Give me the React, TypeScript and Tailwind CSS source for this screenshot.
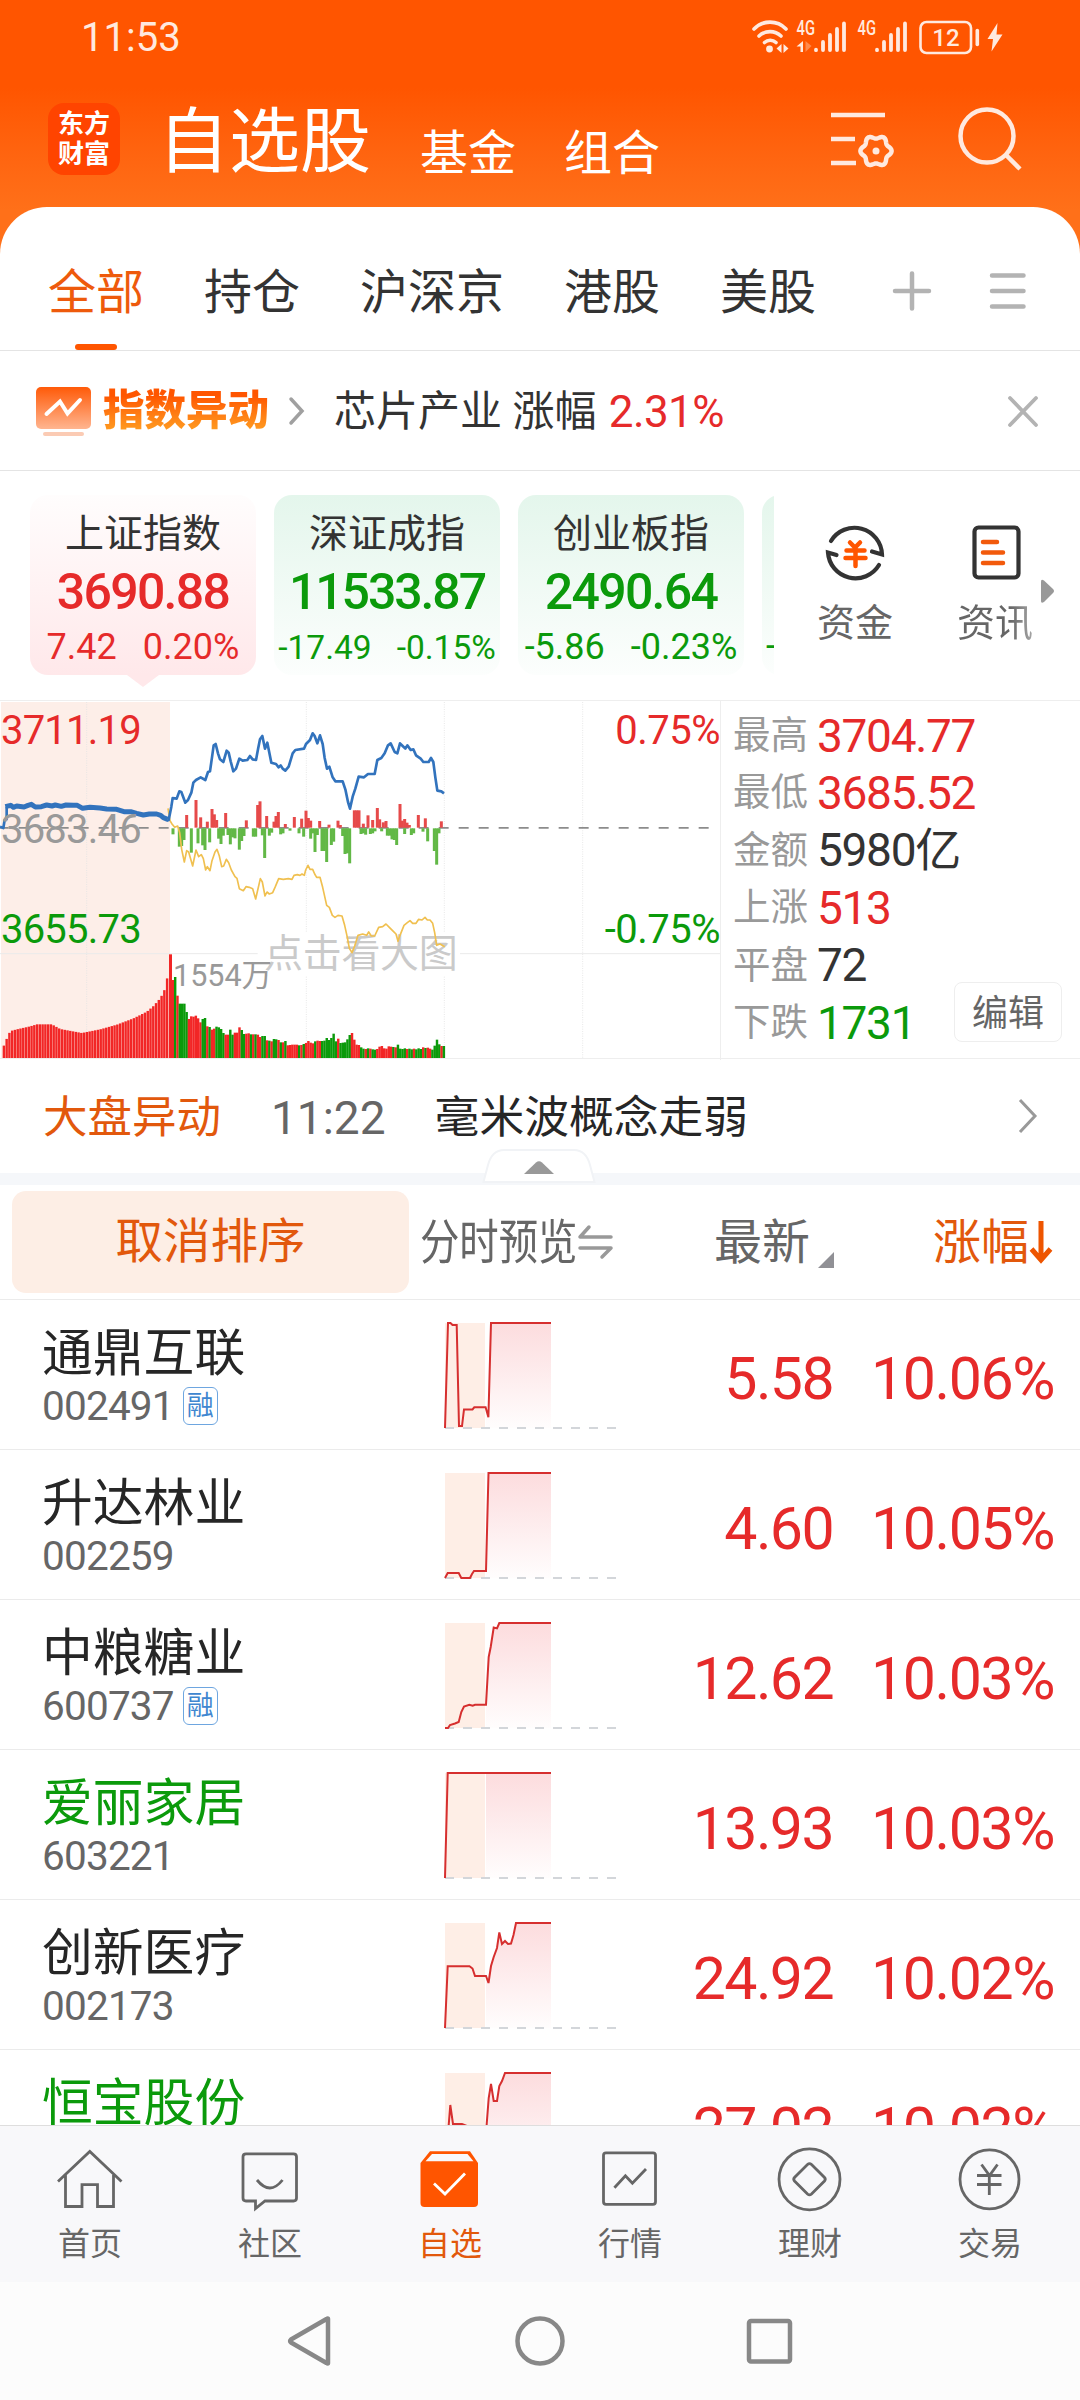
import type { ReactNode } from "react"

const tabs = ["全部", "持仓", "沪深京", "港股", "美股"]

const indexes = [
  { name: "上证指数", value: "3690.88", diff: "7.42", rate: "0.20%", up: true, small: false },
  { name: "深证成指", value: "11533.87", diff: "-17.49", rate: "-0.15%", up: false, small: true },
  { name: "创业板指", value: "2490.64", diff: "-5.86", rate: "-0.23%", up: false, small: false },
]

const stats = [
  { label: "最高", value: "3704.77", color: "text-[#e62a2a]" },
  { label: "最低", value: "3685.52", color: "text-[#e62a2a]" },
  { label: "金额", value: "5980亿", color: "text-[#333333]" },
  { label: "上涨", value: "513", color: "text-[#e62a2a]" },
  { label: "平盘", value: "72", color: "text-[#333333]" },
  { label: "下跌", value: "1731", color: "text-[#0b9a0b]" },
]

const stocks = [
  {
    name: "通鼎互联",
    code: "002491",
    margin: true,
    price: "5.58",
    rate: "10.06%",
    line: "0,105 3,0 5.5,0 7.5,2 11.7,2 14,103 17,103 19,86.5 27.5,86.5 29.3,84.3 40.6,84.3 43.4,94.3 46,0 106,0",
    area: "41,85 43.4,94.3 46,0 106,0 106,105 41,105",
  },
  {
    name: "升达林业",
    code: "002259",
    price: "4.60",
    rate: "10.05%",
    line: "0,105 2.7,100 13.7,100 16.3,105 25,105 27,101 29,98 41,98 43.5,0 106,0",
    area: "41,98 43.5,0 106,0 106,105 41,105",
  },
  {
    name: "中粮糖业",
    code: "600737",
    margin: true,
    price: "12.62",
    rate: "10.03%",
    line: "0,105 3,105 5,102 10,100.5 13.7,99 16.3,89 19,83.5 24.3,81.7 27.7,82.6 30,81.7 41,81.7 43.7,34 45.7,24 48.7,4.5 52,5.4 54.3,0 106,0",
    area: "41,81.7 43.7,34 45.7,24 48.7,4.5 52,5.4 54.3,0 106,0 106,105 41,105",
  },
  {
    name: "爱丽家居",
    code: "603221",
    green: true,
    price: "13.93",
    rate: "10.03%",
    line: "0,105 2.7,0 106,0",
    area: "41,0 106,0 106,105 41,105",
  },
  {
    name: "创新医疗",
    code: "002173",
    price: "24.92",
    rate: "10.02%",
    line: "0,105 2.7,43.3 24.5,43.3 27.5,45.5 30,53 41,53 43.5,60 46,43 48.7,34 52,25 54.3,9.4 57,21 60,18 63,21 66,20.5 68.5,12 71,0 106,0",
    area: "41,53 43.5,60 46,43 48.7,34 52,25 54.3,9.4 57,21 60,18 63,21 66,20.5 68.5,12 71,0 106,0 106,105 41,105",
  },
  {
    name: "恒宝股份",
    green: true,
    price: "27.02",
    rate: "10.02%",
    line: "0,105 3.7,52 5.3,32 8,51 17,51 22,53 41,60 43.7,25 46,11 48.7,28 52,28 54.3,13 57,8 60,0 106,0",
    area: "41,60 43.7,25 46,11 48.7,28 52,28 54.3,13 57,8 60,0 106,0 106,105 41,105",
  },
]

// chart data, in thirds of a pixel
const morningTops = [
  [8, 1074], [18, 1050], [26, 1030], [35, 1022], [50, 1018], [90, 1009], [110, 1003], [155, 1003],
  [180, 1017], [245, 1029], [300, 1018], [350, 1004], [400, 985], [440, 965], [460, 948], [480, 925],
  [492, 903], [498, 865], [510, 866],
]

const afternoonVolume =
  "234r 243g 187r 163g 163g 163g 138g 117r 125r 124r 127r 119r 107r 117g 120g 95r 93g 85r 88r 94g 92g 87g 75g 70r 70r 85g 70g 76r 76r 92r 84g 72g 73r 74r 71g 71r 71g 70r 63r 66g 66g 53r 52g 50r 57g 56g 54r 47g 47r 51g 38r 39r 40r 40r 40r 38g 39r 42g 45r 51r 46r 44r 50g 52r 51r 51g 52g 60g 54g 60g 73g 50g 58r 45g 46g 47g 56g 69g 75r 55r 40r 39r 32g 28g 27r 29g 28r 26g 25g 27r 34r 36r 29r 28r 35r 34r 33g 32r 40g 28g 27g 29g 27r 28g 26g 28r 26g 29g 27g 32r 30g 31r 28r 25g 37g 55g 41g 36r 36g".split(
    " ",
  )

const ups = [
  [560, 375], [588, 330], [602, 382], [622, 395], [636, 357], [643, 373], [650, 390], [677, 369],
  [739, 391], [773, 345], [780, 334], [800, 378], [822, 395], [828, 378], [835, 366], [856, 402],
  [883, 381], [905, 386], [918, 362], [925, 384], [932, 392], [959, 393], [987, 404], [1014, 392],
  [1021, 405], [1063, 361], [1070, 361], [1077, 361], [1090, 401], [1104, 376], [1118, 390],
  [1132, 354], [1139, 388], [1150, 397], [1158, 393], [1200, 342], [1207, 392], [1214, 387],
  [1221, 398], [1228, 405], [1255, 375], [1276, 385], [1324, 394],
]

const downs = [
  [519, 433], [538, 470], [545, 468], [552, 450], [574, 488], [594, 460], [608, 466], [615, 480],
  [629, 457], [656, 446], [663, 462], [670, 437], [684, 435], [691, 463], [698, 442], [705, 445],
  [718, 479], [725, 453], [732, 438], [760, 440], [767, 440], [787, 436], [794, 504], [808, 437],
  [815, 428], [842, 433], [849, 430], [870, 422], [897, 430], [911, 440], [932, 446], [938, 430],
  [945, 486], [952, 435], [966, 483], [973, 483], [980, 516], [994, 465], [1001, 455], [1028, 438],
  [1035, 492], [1042, 490], [1049, 520], [1083, 432], [1090, 430], [1097, 434], [1111, 432],
  [1118, 430], [1125, 424], [1145, 424], [1162, 437], [1169, 437], [1176, 448], [1183, 450],
  [1190, 465], [1214, 432], [1234, 435], [1241, 430], [1269, 425], [1283, 454], [1303, 483],
  [1310, 524], [1317, 430],
]

function topAt(x: number) {
  for (let i = 1; i < morningTops.length; i++) {
    const [x0, y0] = morningTops[i - 1]
    const [x1, y1] = morningTops[i]
    if (x <= x1) return y0 + ((y1 - y0) * (x - x0)) / (x1 - x0)
  }
  return 866
}

// six-lobed outline of the settings gear
const gear = Array.from({ length: 72 }, (_, i) => {
  const a = (i * Math.PI) / 36
  const r = 14 + 1.6 * Math.cos(6 * a)
  return `${(49 + r * Math.cos(a)).toFixed(2)},${(45 + r * Math.sin(a)).toFixed(2)}`
}).join(" ")

function StatusIcons() {
  return (
    <svg width="260" height="44" viewBox="0 0 260 44" fill="none" stroke="#ffe9df" strokeLinecap="round">
      <path d="M4 13a22 22 0 0 1 32 0" strokeWidth="3.6" />
      <path d="M9 20a16 16 0 0 1 22 0" strokeWidth="3.6" />
      <path d="M14.500 26.500a8.500 8.500 0 0 1 11.500 0" strokeWidth="3.6" />
      <circle cx="19.500" cy="33" r="3.400" fill="#ffe9df" stroke="none" />
      <path d="M31.500 28v9l-5-4.500zM33.500 28v9l5-4.500z" fill="#ffe9df" stroke="none" />
      <path d="M53 25v11h-2.500v-5.500h-4z" fill="#ffe9df" stroke="none" />
      <path d="M55.500 25v11l6-6z" fill="#ff8a4d" stroke="none" />
      <path d="M66 34.200v-.5M73 34v-8M80 34v-15M87 34V13M94 34V7.500" strokeWidth="3.800" />
      <path d="M127 34.200v-.5M134 34v-8M141 34v-15M148 34V13M155 34V7.500" strokeWidth="3.800" />
      <rect x="170.500" y="6" width="50.500" height="31" rx="6" strokeWidth="2.600" />
      <path d="M227.300 14.500v14" strokeWidth="3.600" />
      <path d="M247.500 7l-10 16h5.500l-1.500 12.500 11-17h-6z" fill="#ffe9df" stroke="none" />
      <g fill="#ffe9df" stroke="none" className="font-medium">
        <text x="46.500" y="18.500" fontSize="19.500" textLength="18.500" lengthAdjust="spacingAndGlyphs">4G</text>
        <text x="107.500" y="18.500" fontSize="19.500" textLength="18.500" lengthAdjust="spacingAndGlyphs">4G</text>
        <text x="196" y="30" fontSize="24" textAnchor="middle">12</text>
      </g>
    </svg>
  )
}

function Header() {
  return (
    <header className="h-[207px] text-white">
      <div className="flex h-[76px] items-center justify-between pl-[81px] pr-[70px]">
        <span className="text-[40px] leading-none text-[#ffe9df]">11:53</span>
        <StatusIcons />
      </div>
      <div className="flex h-[131px] items-start pl-12">
        <div className="mt-[27px] flex h-[72px] w-[72px] flex-col items-center justify-center rounded-2xl bg-[#ff4400] text-[26px] font-bold leading-[30px]">
          <span>东方</span>
          <span>财富</span>
        </div>
        <h1 className="ml-[38px] mt-[30px] text-[71px] leading-none">自选股</h1>
        <span className="ml-[49px] mt-[54px] text-[48px] leading-none">基金</span>
        <span className="ml-[48px] mt-[54px] text-[48px] leading-none">组合</span>
        <svg className="ml-[167px] mt-[30px]" width="68" height="68" viewBox="0 0 68 68" fill="none" stroke="#ffe9df" strokeWidth="4.500">
          <path d="M4 9h54M4 33h24M4 57h25" />
          <polygon points={gear} strokeLinejoin="round" />
          <circle cx="49" cy="45" r="3.500" fill="#ffe9df" stroke="none" />
        </svg>
        <svg className="ml-[60px] mt-[30px]" width="70" height="70" viewBox="0 0 70 70" fill="none" stroke="#ffe9df" strokeWidth="4.500">
          <circle cx="32" cy="30" r="26.500" />
          <path d="M51 49l14 14" />
        </svg>
      </div>
    </header>
  )
}

function Tabs() {
  return (
    <div className="flex h-[144px] items-center rounded-t-[47px] border-b border-[#e4e4e4] bg-white pl-12 pt-6 text-[48px] leading-none text-[#333333]">
      {tabs.map((tab, i) => (
        <div key={tab} className={i === 0 ? "relative mr-[60px] pt-[5px] text-[#ee5a0c]" : i === 4 ? "pt-[5px]" : "mr-[60px] pt-[5px]"}>
          {tab}
          {i === 0 && <span className="absolute -bottom-[33px] left-[27px] h-1.5 w-[42px] rounded-full bg-[#ff5500]" />}
        </div>
      ))}
      <svg className="ml-[76px]" width="40" height="40" viewBox="0 0 40 40" stroke="#b3b3b3" strokeWidth="4.500" strokeLinecap="round">
        <path d="M20 2.500v35M3 20h34" />
      </svg>
      <svg className="ml-[56px]" width="40" height="40" viewBox="0 0 40 40" stroke="#b3b3b3" strokeWidth="4.500" strokeLinecap="round">
        <path d="M4 4.500h31.500M4 20h31.500M4 35.500h31.500" />
      </svg>
    </div>
  )
}

function Notice() {
  return (
    <div className="flex h-[120px] items-center border-b border-[#e4e4e4] pl-9">
      <svg width="56" height="50" viewBox="0 0 56 50" fill="none">
        <defs>
          <linearGradient id="notice" x1="0" y1="0" x2="0" y2="1">
            <stop offset="0" stopColor="#ff5a08" />
            <stop offset="1" stopColor="#ffb590" />
          </linearGradient>
        </defs>
        <rect y="1" width="55" height="42" rx="5" fill="url(#notice)" />
        <rect x="7" y="46" width="41" height="4" rx="2" fill="#fbcbb4" />
        <path d="M10.500 28L24 15.500l7.500 12L44 14" stroke="#fff" strokeWidth="4" strokeLinecap="round" />
      </svg>
      <span className="ml-[11px] bg-gradient-to-b from-[#ff5500] from-20% to-[#ff9a20] to-90% bg-clip-text text-[41.500px] font-black leading-[1.2] text-transparent">
        指数异动
      </span>
      <svg className="ml-[18px]" width="20" height="30" viewBox="0 0 20 30" fill="none" stroke="#a0a0a0" strokeWidth="3.500" strokeLinecap="round">
        <path d="M4 3l11 12L4 27" />
      </svg>
      <span className="ml-[27px] mt-0.5 whitespace-pre text-[42px] leading-none text-[#333333]">芯片产业 涨幅 </span>
      <span className="ml-[2px] mt-0.5 text-[44px] leading-none tracking-[-0.600px] text-[#e62a2a]">2.31%</span>
      <svg className="ml-auto mr-[41px]" width="32" height="32" viewBox="0 0 32 32" stroke="#b3b3b3" strokeWidth="3.800" strokeLinecap="round">
        <path d="M3 3l26 27M29 3L3 30" />
      </svg>
    </div>
  )
}

function Indexes() {
  return (
    <div className="flex h-[229px] pt-6">
      <div className="flex w-[774px] gap-[18px] overflow-hidden pl-[30px]">
        {indexes.map((item) => (
          <div key={item.name} className="w-[226px] shrink-0">
            <div
              className={
                item.up
                  ? "flex h-[180px] flex-col items-center rounded-[18px] bg-gradient-to-b from-[#fffdfd] to-[#ffe8ea] pt-[19px] text-[#e62a2a]"
                  : "flex h-[180px] flex-col items-center rounded-[18px] bg-gradient-to-b from-[#e4f6ec] to-[#fcfefd] pt-[19px] text-[#0b9a0b]"
              }
            >
              <span className="text-[39px] leading-[40px] text-[#333333]">{item.name}</span>
              <span
                className={
                  item.small
                    ? "mt-[13px] text-[50px] font-medium leading-[50px] tracking-[-2.100px]"
                    : "mt-[13px] text-[50px] font-medium leading-[50px] tracking-[-1.700px]"
                }
              >
                {item.value}
              </span>
              <div
                className={
                  item.small
                    ? "mt-[13px] flex gap-[25px] whitespace-nowrap text-[33.500px] leading-[36px]"
                    : "mt-[12px] flex gap-[26px] whitespace-nowrap text-[36px] leading-[36px]"
                }
              >
                <span>{item.diff}</span>
                <span>{item.rate}</span>
              </div>
            </div>
            {item.up && (
              <svg className="mx-auto" width="32" height="12" viewBox="0 0 32 12">
                <path d="M0 0h32L16 12z" fill="#ffe8ea" />
              </svg>
            )}
          </div>
        ))}
        <div className="h-[180px] w-[226px] shrink-0 rounded-[18px] bg-gradient-to-b from-[#e4f6ec] to-[#fcfefd] pl-1 pt-[133px] text-[36px] leading-[36px] text-[#0b9a0b]">
          -
        </div>
      </div>
      <div className="flex flex-1 text-[38px] leading-none text-[#666666]">
        <div className="ml-[43px] flex w-[76px] flex-col items-center pt-6">
          <svg width="66" height="66" viewBox="0 0 66 66" fill="none" stroke="#333" strokeWidth="4.200" strokeLinecap="round">
            <path d="M9 22A27.500 27.500 0 0 1 60 35.500L50 32.500" />
            <path d="M57 46A27.500 27.500 0 0 1 6 33.500L14.500 36" />
            <g stroke="#ff5500" strokeWidth="4.500">
              <path d="M28 23.500l5 5 5-5M24.500 31.500h18M23.500 39h20M33.500 29v18" />
            </g>
          </svg>
          <span className="mt-[19px]">资金</span>
        </div>
        <div className="ml-[64px] flex w-[76px] flex-col items-center pt-6">
          <svg width="66" height="66" viewBox="0 0 66 66" fill="none" stroke="#333" strokeWidth="4.200" strokeLinecap="round">
            <rect x="12.500" y="8.500" width="44" height="50" rx="4" />
            <path d="M21 23h14M21 33.500h20M21 44h20" stroke="#f25a0c" strokeWidth="4.500" />
          </svg>
          <span className="mt-[19px] bg-gradient-to-r from-[#666666] from-70% to-[#a8a8a8] bg-clip-text text-transparent">
            资讯
          </span>
        </div>
        <svg className="ml-[6px] mt-[83px]" width="18" height="26" viewBox="0 0 18 26">
          <path d="M2 3.500q0-3 3-1L14 11q2 2 0 4l-9 9q-3 2-3-1z" fill="#999" />
        </svg>
      </div>
    </div>
  )
}

function TrendChart() {
  const bars: ReactNode[] = []
  for (let x = 8; x < 506; x += 8.3) {
    const y = topAt(x + 3)
    bars.push(<rect key={x} x={x} y={y} width={7.300} height={1104 - y} fill="#f22626" />)
  }
  return (
    <div className="relative h-[359px] w-[721px] border-r border-[#eeeeee]">
      <span className="absolute left-[264px] top-[234px] text-[39px] leading-none tracking-[-0.300px] text-[#cacaca]">点击看大图</span>
      <svg className="absolute left-0 top-0" width="720" height="359" viewBox="0 33 2160 1077" fill="none">
        <rect x="3" y="36" width="507" height="1068" fill="#fdeee8" />
        <path d="M0 791h773M1380 791h780" stroke="#eaeaea" strokeWidth="3" />
        <path d="M260 36v1068M919 36v690M919 860v244M1333 36v690M1333 860v244M1748 36v1068" stroke="#e3e3e3" strokeWidth="2.500" strokeDasharray="3 4" />
        <path d="M0 413.500h2136" stroke="#8c8c8c" strokeWidth="5" strokeDasharray="30 30" strokeDashoffset="4" />
        {bars}
        <rect x="507" y="793" width="9" height="311" fill="#f22626" />
        {afternoonVolume.map((v, i) => {
          const h = parseInt(v)
          return (
            <rect key={i} x={515 + i * 6.890} y={1104 - h} width="7.300" height={h} fill={v.endsWith("g") ? "#0b9a0b" : "#f22626"} />
          )
        })}
        {ups.map(([x, y]) => (
          <rect key={x} x={x - 4.500} y={y} width="9" height={413 - y} fill="#e64a4a" />
        ))}
        {downs.map(([x, y]) => (
          <rect key={x} x={x - 4.500} y="415" width="9" height={y - 415} fill="#62b846" />
        ))}
        <polyline
          stroke="#f0c050"
          strokeWidth="5"
          strokeLinejoin="round"
          points="504,355 510,392 516,402 524,412 533,408 539,428 545,478 553,516 560,482 566,486 578,528 588,480 596,500 604,494 610,506 617,540 622,530 630,542 636,512 645,486 651,478 658,498 665,530 671,528 679,508 686,518 694,540 705,560 711,565 718,596 730,602 738,590 748,592 758,596 767,627 781,566 787,576 795,618 801,606 808,612 818,608 826,590 836,566 850,568 865,566 876,568 882,556 892,554 900,556 906,552 913,556 917,540 924,526 930,538 938,538 944,552 950,562 960,562 968,592 980,646 988,652 997,676 1005,682 1014,676 1026,678 1034,706 1042,742 1048,775 1056,788 1064,768 1074,736 1088,732 1100,736 1106,726 1114,738 1124,738 1136,712 1148,710 1158,702 1168,712 1180,724 1188,732 1194,754 1200,736 1212,706 1222,698 1230,692 1238,700 1248,700 1256,688 1266,690 1275,682 1282,690 1290,690 1298,700 1304,728 1310,766 1320,762 1334,770"
        />
        <polyline
          stroke="#3273bd"
          strokeWidth="15"
          strokeLinejoin="round"
          points="16,350 32,346 40,352 50,348 72,351 84,346 94,343 106,351 124,350 140,345 156,348 166,345 184,349 198,345 220,346 232,346 248,355 270,352 300,354 320,357 350,358 372,365 392,365 410,370 430,375 448,372 470,372 482,376 490,383 503,388"
        />
        <polyline stroke="#3273bd" strokeWidth="8" strokeLinejoin="round" points="0,410 10,414 14,390 20,388 20,350" />
        <polyline
          stroke="#3273bd"
          strokeWidth="8"
          strokeLinejoin="round"
          points="500,392 506,390 514,350 518,324 530,326 538,304 544,306 556,338 564,330 574,308 580,278 588,270 602,262 616,270 624,246 630,244 636,202 641,166 647,162 654,190 660,208 670,216 680,182 686,188 692,214 700,244 708,236 718,206 728,212 742,210 750,198 758,208 768,210 774,178 780,148 787,138 795,176 802,158 814,218 828,222 836,232 842,226 848,236 856,242 866,230 878,190 886,180 912,176 918,162 930,150 938,130 944,138 952,160 960,136 968,162 974,204 981,236 988,230 998,262 1006,274 1028,274 1036,298 1044,336 1050,356 1058,320 1066,296 1076,260 1092,262 1104,252 1124,252 1132,210 1144,204 1154,190 1164,166 1172,160 1184,186 1192,190 1200,160 1208,168 1216,176 1222,166 1232,180 1240,178 1248,196 1262,206 1270,216 1286,216 1293,204 1300,216 1306,262 1312,302 1324,304 1332,310"
        />
      </svg>
      <div className="absolute left-[1px] top-[10px] text-[40px] leading-none tracking-[-0.800px] text-[#e62a2a]">3711.19</div>
      <div className="absolute left-[1px] top-[109px] text-[40px] leading-none tracking-[-0.800px] text-[#999999]">3683.46</div>
      <div className="absolute left-[1px] top-[209px] text-[40px] leading-none tracking-[-0.800px] text-[#0b9a0b]">3655.73</div>
      <div className="absolute right-0 top-[10px] text-[40px] leading-none tracking-[-0.500px] text-[#e62a2a]">0.75%</div>
      <div className="absolute right-0 top-[209px] text-[40px] leading-none tracking-[-0.500px] text-[#0b9a0b]">-0.75%</div>
      <div className="absolute left-[173px] top-[260px] text-[30.500px] leading-none text-[#999999]">1554万</div>
    </div>
  )
}

function Market() {
  return (
    <div className="flex h-[359px] border-y border-[#eeeeee]">
      <TrendChart />
      <div className="relative flex-1 pl-[12px] pt-[6px]">
        {stats.map((item) => (
          <div key={item.label} className="flex h-[57.400px] items-center">
            <span className="w-[84px] text-[37.500px] leading-none text-[#999999]">{item.label}</span>
            <span className={`text-[46px] leading-none tracking-[-1.300px] ${item.color}`}>{item.value}</span>
          </div>
        ))}
        <div className="absolute bottom-[16px] right-[18px] flex h-[60px] w-[108px] items-center justify-center rounded-lg border border-[#eeeeee] bg-white pt-[3px] text-[36px] leading-none text-[#666666]">
          编辑
        </div>
      </div>
    </div>
  )
}

function MarketNews() {
  return (
    <div className="relative flex h-[126px] items-center border-b-[12px] border-[#f5f7fa] pl-[43px] leading-none">
      <span className="mt-1 text-[44.500px] text-[#e2580c]">大盘异动</span>
      <span className="ml-[50px] mt-1 text-[46px] text-[#666666]">11:22</span>
      <span className="ml-[49px] mt-1 text-[44.800px] text-[#262626]">毫米波概念走弱</span>
      <svg className="ml-auto mr-[41px]" width="22" height="38" viewBox="0 0 22 38" fill="none" stroke="#999" strokeWidth="3">
        <path d="M3 3l15 16L3 35" />
      </svg>
      <svg className="absolute -bottom-[11px] left-[482px]" width="114" height="36" viewBox="0 0 114 36">
        <path d="M1.500 34L6 17Q10 2 22 2h70q12 0 16 15l4.500 17z" fill="#fff" stroke="#f1f3f6" strokeWidth="2" />
        <path d="M42 26L54 14.500q3-2.500 6 0L72 26z" fill="#999" />
      </svg>
    </div>
  )
}

function TableHead() {
  return (
    <div className="flex h-[115px] items-center border-b border-[#ebebeb] pl-3 text-[48px] leading-none text-[#666666]">
      <div className="flex h-[102px] w-[397px] items-center justify-center rounded-[14px] bg-[#fdeee5] pt-[2px] text-[47.500px] text-[#e2580c]">
        取消排序
      </div>
      <div className="ml-[11px] mt-0.5 w-[157px]">
        <span className="inline-block origin-left scale-x-[0.82] whitespace-nowrap">分时预览</span>
      </div>
      <svg width="36" height="36" viewBox="0 0 36 36" fill="none" stroke="#999" strokeWidth="3.500" strokeLinecap="round" strokeLinejoin="round">
        <path d="M12 3L3 13h31M3 24h31l-9 9" />
      </svg>
      <span className="ml-[101px] mt-0.5">最新</span>
      <svg className="ml-[8px] mt-[35px]" width="16" height="16" viewBox="0 0 16 16">
        <path d="M16 0v16H0z" fill="#909095" />
      </svg>
      <span className="ml-[99px] mt-0.5 text-[#e2580c]">涨幅</span>
      <svg width="24" height="44" viewBox="0 0 24 44" fill="none" stroke="#ee5500" strokeWidth="5">
        <path d="M12 1v38M2.500 29L12 40l9.500-11" />
      </svg>
    </div>
  )
}

function StockRow({ stock }: { stock: (typeof stocks)[number] }) {
  return (
    <div className="flex h-[150px] shrink-0 border-b border-[#ebebeb]">
      <div className="w-[442px] pl-[42px] pt-[27px]">
        <div className={`text-[50.800px] leading-[54px] ${stock.green ? "text-[#0b9a0b]" : "text-[#262626]"}`}>{stock.name}</div>
        {stock.code && (
          <div className="flex items-center pt-[1px] text-[40.500px] leading-[48px] tracking-[-0.800px] text-[#666666]">
            {stock.code}
            {stock.margin && (
              <span className="ml-[9px] flex h-[38px] w-[35px] items-center justify-center rounded-md border border-[#6ea6e0] text-[27px] leading-none tracking-normal text-[#3f87d0]">
                融
              </span>
            )}
          </div>
        )}
      </div>
      <svg className="mt-[20px]" width="180" height="112" viewBox="-3 -3 180 112" fill="none">
        <rect width="40" height="105" fill="#feeee6" />
        <polygon points={stock.area} fill="url(#spark)" />
        <path d="M0 105h172" stroke="#d3d6da" strokeWidth="2" strokeDasharray="9 9" />
        <polyline points={stock.line} stroke="#d62f2f" strokeWidth="2" />
      </svg>
      <span className="ml-auto mt-[49px] text-[59px] leading-none tracking-[-1.600px] text-[#e62a2a]">{stock.price}</span>
      <span className="mr-[26px] mt-[49px] w-[221px] text-right text-[59px] leading-none tracking-[-1.400px] text-[#e62a2a]">
        {stock.rate}
      </span>
    </div>
  )
}

const navItems = [
  {
    label: "首页",
    icon: <path d="M4 35.500L35.800 5.500l31.700 30M11.500 29v31.500h16.500V38.700h15.500v21.800h16V29" />,
  },
  {
    label: "社区",
    icon: (
      <>
        <path d="M12 7.800h47.500q3 0 3 3V52q0 3-3 3H31l-9.500 7.500V55H12q-3 0-3-3V10.800q0-3 3-3z" />
        <path d="M23 34q13 16 25.500 0" />
      </>
    ),
  },
  {
    label: "自选",
    active: true,
    icon: (
      <>
        <path d="M6.500 17L16 5.200h40L64 17v40q0 4-4 4H10.500q-4 0-4-4z" fill="#ff5500" stroke="none" />
        <path d="M11.500 15.300l6.500-7.300h35.500l6 7.300z" fill="#f8f8fa" stroke="none" />
        <path d="M20 37.500l11 10.500 20-20.500" stroke="#fff" />
      </>
    ),
  },
  {
    label: "行情",
    icon: (
      <>
        <rect x="9.500" y="6.800" width="52" height="51.500" rx="2.500" />
        <path d="M20.400 41.700l11-12 7 7.600L52 23" />
      </>
    ),
  },
  {
    label: "理财",
    icon: (
      <>
        <circle cx="35.500" cy="33.300" r="30.500" />
        <path d="M37.500 18.500l13 13q1.500 1.800 0 3.500l-13 13q-2 1.700-4 0l-13-13q-1.500-1.700 0-3.500l13-13q2-1.700 4 0z" />
      </>
    ),
  },
  {
    label: "交易",
    icon: (
      <>
        <circle cx="35.500" cy="33.300" r="29.500" />
        <path d="M27.500 18.500l8 11 8-11M23 29.500h24.500M23 38.500h24.500M35.300 29.500v19.500" />
      </>
    ),
  },
]

function BottomNav() {
  return (
    <nav className="flex h-[157px] border-t border-[#dedede] bg-[#f8f8fa]">
      {navItems.map((item) => (
        <div key={item.label} className="flex flex-1 flex-col items-center pt-5">
          <svg width="72" height="72" viewBox="0 0 72 72" fill="none" stroke="#666" strokeWidth="2.800">
            {item.icon}
          </svg>
          <span className={`mt-[10px] text-[32px] leading-none ${item.active ? "text-[#e2580c]" : "text-[#666666]"}`}>{item.label}</span>
        </div>
      ))}
    </nav>
  )
}

function SystemNav() {
  return (
    <div className="flex h-[118px] items-center justify-center gap-[174px] bg-[#fcfcfc]">
      <svg width="56" height="56" viewBox="0 0 56 56" fill="none" stroke="#888" strokeWidth="4.500" strokeLinejoin="round">
        <path d="M46 6v44q0 1-1.500 0L9 29.500q-1.500-1.500 0-3L44.500 6q1.500-1 1.500 0z" />
      </svg>
      <svg width="56" height="56" viewBox="0 0 56 56" fill="none" stroke="#888" strokeWidth="4.500">
        <circle cx="28" cy="28" r="22.500" />
      </svg>
      <svg width="56" height="56" viewBox="0 0 56 56" fill="none" stroke="#888" strokeWidth="4.500">
        <rect x="7" y="8" width="41" height="40.500" rx="2" />
      </svg>
    </div>
  )
}

export default function App() {
  return (
    <div className="flex h-[2400px] w-[1080px] flex-col overflow-hidden bg-white font-['Roboto','Noto_Sans_CJK_SC',sans-serif]">
      <svg className="absolute" width="0" height="0">
        <defs>
          <linearGradient id="spark" x1="0" y1="0" x2="0" y2="1">
            <stop offset="0" stopColor="#f03c46" stopOpacity="0.180" />
            <stop offset="1" stopColor="#f03c46" stopOpacity="0.010" />
          </linearGradient>
        </defs>
      </svg>

      {/* Header + group tabs */}
      <div className="bg-gradient-to-b from-[#ff5500] from-25% to-[#ff7019] to-60%">
        <Header />
        <Tabs />
      </div>

      <Notice />
      <Indexes />
      <Market />
      <MarketNews />

      {/* Stock list */}
      <TableHead />
      <div className="flex min-h-0 flex-1 flex-col overflow-hidden">
        {stocks.map((stock) => (
          <StockRow key={stock.name} stock={stock} />
        ))}
      </div>

      <BottomNav />
      <SystemNav />
    </div>
  )
}
